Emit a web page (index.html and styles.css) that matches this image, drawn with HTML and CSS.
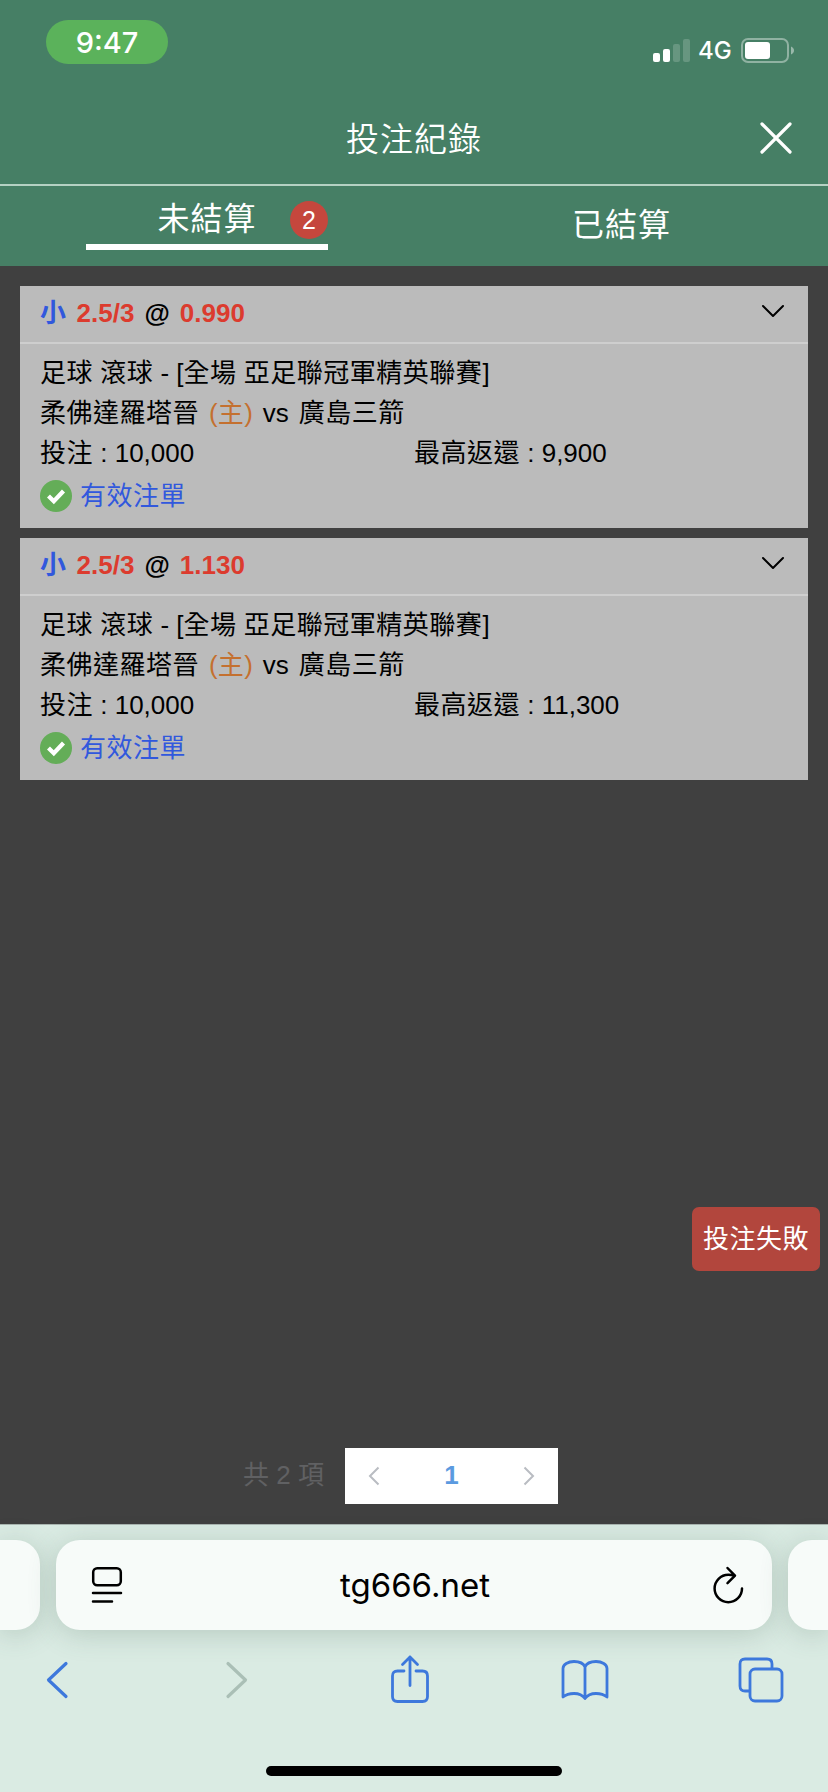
FILE: index.html
```html
<!DOCTYPE html>
<html lang="zh-Hant">
<head>
<meta charset="utf-8">
<title>投注紀錄</title>
<link rel="stylesheet" href="styles.css">
</head>
<body>
<div class="screen">
  <header class="status">
    <div class="clock">9:47</div>
    <div class="signals">
      <svg class="bars" width="37" height="24" viewBox="0 0 37 24" fill="#fff"><rect y="14" width="7" height="9" rx="2"/><rect x="10" y="10" width="7" height="13" rx="2"/><rect x="20" y="5" width="7" height="18" rx="2" opacity=".18"/><rect x="30" width="7" height="23" rx="2" opacity=".18"/></svg>
      <span class="network">4G</span>
      <svg width="54" height="26" viewBox="0 0 54 26"><rect x="1" y="1" width="46" height="23" rx="6" fill="none" stroke="#fff" stroke-width="2" opacity=".4"/><rect x="4" y="4" width="25" height="17" rx="3" fill="#fff"/><path d="M50 8.500c4 1.500 4 6.500 0 8z" fill="#fff" opacity=".45"/></svg>
    </div>
  </header>
  <div class="titlebar">
    <h1 class="title">投注紀錄</h1>
    <svg class="close" width="34" height="34" viewBox="0 0 34 34"><path d="M3 3l28 28M31 3L3 31" stroke="#fff" stroke-width="3.200" stroke-linecap="round"/></svg>
  </div>
  <nav class="tabs">
    <div class="tab tab-active"><div class="tab-inner"><span>未結算</span><span class="badge">2</span></div></div>
    <div class="tab"><span>已結算</span></div>
  </nav>
  <main class="content">
    <article class="card">
      <div class="card-head"><div class="pick"><span class="side cjk">小</span> <b>2.5/3</b> <i class="at">@</i> <b>0.990</b></div><svg class="expand" width="26" height="16" viewBox="0 0 26 16" fill="none"><path d="M3 3l10 10L23 3" stroke="#000" stroke-width="2" stroke-linecap="round" stroke-linejoin="round"/></svg></div>
      <div class="card-body">
        <div class="line"><span class="cjk">足球</span> <span class="cjk">滾球</span> - [<span class="cjk">全場</span> <span class="cjk">亞足聯冠軍精英聯賽</span>]</div>
        <div class="line teams"><span class="cjk">柔佛達羅塔晉</span> <span class="home">(<span class="cjk">主</span>)</span> vs <span class="cjk">廣島三箭</span></div>
        <div class="line amounts"><div><span class="cjk">投注</span> : 10,000</div><div><span class="cjk">最高返還</span> : 9,900</div></div>
        <div class="state"><svg width="32" height="32" viewBox="0 0 32 32" fill="none"><circle cx="16" cy="16" r="16" fill="#64ad58"/><path d="M8.500 16l5.300 5.300L23.500 11" stroke="#fff" stroke-width="4.200"/></svg><span class="cjk">有效注單</span></div>
      </div>
    </article>
    <article class="card">
      <div class="card-head"><div class="pick"><span class="side cjk">小</span> <b>2.5/3</b> <i class="at">@</i> <b>1.130</b></div><svg class="expand" width="26" height="16" viewBox="0 0 26 16" fill="none"><path d="M3 3l10 10L23 3" stroke="#000" stroke-width="2" stroke-linecap="round" stroke-linejoin="round"/></svg></div>
      <div class="card-body">
        <div class="line"><span class="cjk">足球</span> <span class="cjk">滾球</span> - [<span class="cjk">全場</span> <span class="cjk">亞足聯冠軍精英聯賽</span>]</div>
        <div class="line teams"><span class="cjk">柔佛達羅塔晉</span> <span class="home">(<span class="cjk">主</span>)</span> vs <span class="cjk">廣島三箭</span></div>
        <div class="line amounts"><div><span class="cjk">投注</span> : 10,000</div><div><span class="cjk">最高返還</span> : 11,300</div></div>
        <div class="state"><svg width="32" height="32" viewBox="0 0 32 32" fill="none"><circle cx="16" cy="16" r="16" fill="#64ad58"/><path d="M8.500 16l5.300 5.300L23.500 11" stroke="#fff" stroke-width="4.200"/></svg><span class="cjk">有效注單</span></div>
      </div>
    </article>
    <div class="toast">投注失敗</div>
    <div class="pager">
      <span class="total">共 2 項</span>
      <div class="pages">
        <svg width="12" height="20" viewBox="0 0 12 20" fill="none"><path d="M10.500 1.500L2 10l8.500 8.500" stroke="#b9bcc2" stroke-width="2"/></svg>
        <span class="page">1</span>
        <svg width="12" height="20" viewBox="0 0 12 20" fill="none"><path d="M1.500 1.500L10 10l-8.500 8.500" stroke="#b9bcc2" stroke-width="2"/></svg>
      </div>
    </div>
  </main>
  <footer class="browser">
    <div class="addresses">
      <div class="address side-left"></div>
      <div class="address main-address">
        <svg width="32" height="38" viewBox="0 0 32 38" fill="none" stroke="#000" stroke-width="2.500" stroke-linecap="round"><rect x="2.200" y="2.200" width="27.600" height="17" rx="4"/><path d="M2 27h28M2 35.500h19"/></svg>
        <span class="url">tg666.net</span>
        <svg width="32" height="38" viewBox="0 0 32 38" fill="none" stroke="#000" stroke-width="2.500" stroke-linecap="round" stroke-linejoin="round"><path d="M30 22.500A13.700 13.700 0 1 1 16.300 8.800c2.300 0 4.200.300 6 .900M15.500 2l7.500 7.700-7.500 7.500"/></svg>
      </div>
      <div class="address side-right"></div>
    </div>
    <div class="tools">
      <svg width="24" height="40" viewBox="0 0 24 40" fill="none" stroke="#3d78dc" stroke-width="3.200" stroke-linecap="round" stroke-linejoin="round"><path d="M21 3.500L3.500 20 21 36.500"/></svg>
      <svg width="24" height="40" viewBox="0 0 24 40" fill="none" stroke="#aabfb6" stroke-width="3.200" stroke-linecap="round" stroke-linejoin="round"><path d="M3 3.500L20.500 20 3 36.500"/></svg>
      <svg class="share" width="40" height="50" viewBox="0 0 40 50" fill="none" stroke="#3d78dc" stroke-width="2.800" stroke-linecap="round" stroke-linejoin="round"><path d="M14 17H7.500Q2.500 17 2.500 22v20.500q0 5 5 5h25q5 0 5-5V22q0-5-5-5H26M20 31.500V3M12.500 10.500L20 3l7.500 7.500"/></svg>
      <svg width="50" height="42" viewBox="0 0 50 42" fill="none" stroke="#3d78dc" stroke-width="2.800" stroke-linecap="round" stroke-linejoin="round"><path d="M25 8v31.500M25 8c-1.500-3.500-6-5.500-11-5.500-6 0-11 3-11 7v28.500c3-2.500 6.500-3.500 11-3.500 5 0 8.500 1.500 11 5 2.500-3.500 6-5 11-5 4.500 0 8 1 11 3.500v-28.500c0-4-5-7-11-7-5 0-9.500 2-11 5.500z"/></svg>
      <svg width="46" height="46" viewBox="0 0 46 46" fill="none" stroke="#3d78dc" stroke-width="2.800" stroke-linejoin="round"><rect x="12" y="12" width="32" height="32" rx="5"/><path d="M12 34H7q-5 0-5-5V7q0-5 5-5h22q5 0 5 5v5"/></svg>
    </div>
    <div class="home-bar"></div>
  </footer>
</div>
</body>
</html>
```

FILE: styles.css
```css
* { box-sizing: border-box; }
body {
  margin: 0;
  font-family: "Liberation Sans", "Noto Sans CJK TC", sans-serif;
  font-size: 26px;
}
svg { display: block; flex: none; }
.screen {
  width: 828px;
  height: 1792px;
  overflow: hidden;
  display: flex;
  flex-direction: column;
  background: #404040;
}
.status {
  height: 92px;
  padding: 20px 33px 0 46px;
  display: flex;
  justify-content: space-between;
  align-items: flex-start;
  background: #467f65;
  color: #fff;
  font-family: Inter, sans-serif;
}
.clock {
  width: 122px;
  height: 44px;
  border-radius: 22px;
  background: #5bb25b;
  font-size: 29px;
  font-weight: 500;
  line-height: 45px;
  text-align: center;
}
.signals { display: flex; align-items: center; padding-top: 17px; }
.network {
  width: 51px;
  padding-left: 8px;
  font-size: 24px;
  font-weight: 500;
  line-height: 28px;
}
.titlebar {
  height: 94px;
  border-bottom: 2px solid #b5d1c3;
  display: grid;
  grid-template-columns: 1fr auto 1fr;
  align-items: center;
  padding: 0 35px;
  background: #467f65;
  color: #fff;
}
.title {
  grid-column: 2;
  margin: 0;
  padding-bottom: 2px;
  font-size: 33px;
  font-weight: 350;
  font-family: "Noto Sans CJK TC", sans-serif;
  letter-spacing: 1px;
  line-height: 40px;
}
.close { justify-self: end; }
.tabs {
  height: 80px;
  display: grid;
  grid-template-columns: 1fr 1fr;
  background: #467f65;
  color: #fff;
  font-size: 32px;
  letter-spacing: 1px;
}
.tab { display: flex; justify-content: center; padding-top: 11px; line-height: 56px; padding-left: 1px; }
.tab-active { padding-top: 6px; padding-left: 0; }
.tab-inner {
  position: relative;
  width: 242px;
  height: 58px;
  border-bottom: 6px solid #fff;
  text-align: center;
  line-height: 54px;
}
.badge {
  position: absolute;
  right: 0;
  top: 9px;
  width: 38px;
  height: 38px;
  border-radius: 50%;
  background: #c5473d;
  font-size: 25px;
  line-height: 38px;
  letter-spacing: 0;
}
.content {
  position: relative;
  height: 1258px;
  padding: 20px 20px 20px;
  display: flex;
  flex-direction: column;
  gap: 10px;
}
.card { height: 242px; background: #bbb; color: #000; }
.card-head {
  height: 58px;
  border-bottom: 2px solid #cecece;
  padding: 0 22px 3px 20px;
  display: flex;
  align-items: center;
  justify-content: space-between;
}
.pick { line-height: 52px; height: 52px; font-weight: 700; word-spacing: 2.800px; }
.pick b { color: #dc3b2e; }
.side { color: #3158dd; }
.at { font-style: normal; }
.expand { margin-bottom: 3px; }
.cjk { letter-spacing: .5px; }
.card-body { padding: 9px 20px 0; }
.line { height: 40px; line-height: 40px; white-space: nowrap; }
.teams { word-spacing: 2.700px; }
.home { color: #c4702f; }
.amounts { display: grid; grid-template-columns: 374px 1fr; }
.state {
  height: 46px;
  line-height: 46px;
  display: flex;
  align-items: center;
  gap: 8px;
  color: #3158dd;
}
.toast {
  position: absolute;
  left: 692px;
  top: 941px;
  width: 128px;
  height: 64px;
  border-radius: 7px;
  background: #b2463d;
  color: #fff;
  line-height: 64px;
  letter-spacing: .5px;
  text-align: center;
}
.pager {
  margin-top: auto;
  height: 56px;
  padding-left: 223px;
  display: flex;
  align-items: center;
}
.total { width: 102px; color: #606163; line-height: 54px; height: 56px; }
.pages {
  width: 213px;
  height: 56px;
  padding: 0 23px;
  display: flex;
  align-items: center;
  justify-content: space-between;
  background: #fff;
}
.page { font-weight: 700; color: #5b9ae0; line-height: 54px; height: 56px; }
.browser {
  height: 268px;
  border-top: 1px solid #a9b5b0;
  background: #daebe3;
  display: flex;
  flex-direction: column;
  align-items: center;
}
.addresses {
  width: 828px;
  height: 105px;
  padding-top: 15px;
  display: grid;
  grid-template-columns: 40px 716px 40px;
  gap: 16px;
}
.address { height: 90px; background: #f7fbf9; box-shadow: 0 4px 28px rgba(70, 100, 85, .24); }
.side-left { border-radius: 0 24px 24px 0; }
.side-right { border-radius: 24px 0 0 24px; }
.main-address {
  border-radius: 24px;
  padding: 0 28px 0 35px;
  display: flex;
  align-items: center;
  justify-content: space-between;
}
.url {
  padding-right: 5px;
  font-family: Inter, sans-serif;
  font-size: 33px;
  line-height: 44px;
}
.tools {
  width: 828px;
  height: 100px;
  padding-left: 45px;
  display: grid;
  grid-template-columns: 180px 165px 170px 178px auto;
  align-items: center;
}
.share { margin-bottom: 2px; }
.home-bar { width: 296px; height: 10px; margin-top: 36px; border-radius: 5px; background: #000; }
```
